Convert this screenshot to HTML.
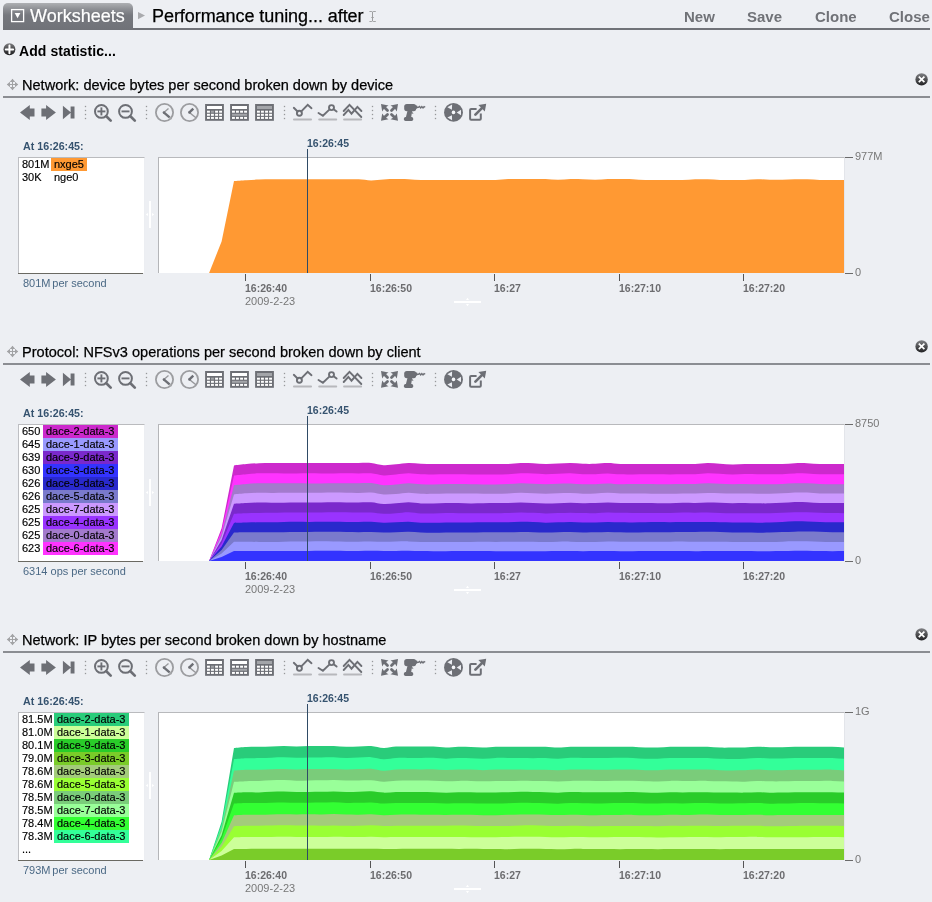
<!DOCTYPE html><html><head><meta charset="utf-8"><title>Worksheets</title><style>
*{box-sizing:border-box;margin:0;padding:0}
html,body{width:932px;height:902px;overflow:hidden;background:#edeff3;font-family:"Liberation Sans",sans-serif;}
#wrap{position:absolute;left:0;top:0;width:932px;height:902px;will-change:transform;}
.abs{position:absolute}
.t{position:absolute;white-space:nowrap;line-height:1}
#tab{left:3px;top:3px;width:130px;height:27px;border-radius:5px 5px 0 0;background:linear-gradient(#aeb0b3 0,#8e9095 22%,#76787e 45%,#707278 100%)}
#hline{left:3px;top:28px;width:927px;height:2px;background:#707278}
.hb{font-weight:bold;font-size:15px;color:#707277;top:9px}
.ptitle{font-size:14.55px;color:#000;-webkit-text-stroke:0.25px #000}
.pline{left:3px;width:927px;height:2px;background:#8b8d92}
.at{font-weight:bold;font-size:10.7px;color:#36536f}
.leg{background:#fff;border:1px solid #babbbe;border-left-color:#bebfc3;border-bottom:0;border-right-color:#eceef2}
.row{position:absolute;left:0;height:13px;font-size:11px;line-height:13px;color:#000;white-space:nowrap;-webkit-text-stroke:0.15px #000}
.row span{position:absolute;top:0;height:13px}
.sum{font-size:11px;color:#4b6985}
.xl{font-weight:bold;font-size:10.5px;color:#6c6c6f}
.xd{font-size:11px;color:#777}
.yl{font-size:11px;color:#777}
.cur{font-weight:bold;font-size:10.5px;color:#36536f}
</style></head><body>
<div id="wrap">
<svg width="0" height="0" style="position:absolute"><defs><g id="tb"><path d="M20 11.5 L29.8 4.1 V7.6 H34.5 V15.5 H29.8 V18.9 Z" fill="#6d6f75"/><path d="M55.9 11.5 L46.1 4.1 V7.6 H41.4 V15.5 H46.1 V18.9 Z" fill="#6d6f75"/><path d="M62.9 4.7 L71 11.5 L62.9 18.3 Z M70.6 5.5 H74.5 V17.5 H70.6 Z" fill="#6d6f75"/><rect x="84.85" y="4.85" width="1.3" height="1.3" fill="#97989b"/><rect x="84.85" y="8.85" width="1.3" height="1.3" fill="#97989b"/><rect x="84.85" y="12.85" width="1.3" height="1.3" fill="#97989b"/><rect x="84.85" y="16.85" width="1.3" height="1.3" fill="#97989b"/><rect x="145.85" y="4.85" width="1.3" height="1.3" fill="#97989b"/><rect x="145.85" y="8.85" width="1.3" height="1.3" fill="#97989b"/><rect x="145.85" y="12.85" width="1.3" height="1.3" fill="#97989b"/><rect x="145.85" y="16.85" width="1.3" height="1.3" fill="#97989b"/><rect x="283.85" y="4.85" width="1.3" height="1.3" fill="#97989b"/><rect x="283.85" y="8.85" width="1.3" height="1.3" fill="#97989b"/><rect x="283.85" y="12.85" width="1.3" height="1.3" fill="#97989b"/><rect x="283.85" y="16.85" width="1.3" height="1.3" fill="#97989b"/><rect x="371.85" y="4.85" width="1.3" height="1.3" fill="#97989b"/><rect x="371.85" y="8.85" width="1.3" height="1.3" fill="#97989b"/><rect x="371.85" y="12.85" width="1.3" height="1.3" fill="#97989b"/><rect x="371.85" y="16.85" width="1.3" height="1.3" fill="#97989b"/><rect x="434.85" y="4.85" width="1.3" height="1.3" fill="#97989b"/><rect x="434.85" y="8.85" width="1.3" height="1.3" fill="#97989b"/><rect x="434.85" y="12.85" width="1.3" height="1.3" fill="#97989b"/><rect x="434.85" y="16.85" width="1.3" height="1.3" fill="#97989b"/><circle cx="101.4" cy="10.4" r="6.4" fill="none" stroke="#6d6f75" stroke-width="2"/><path d="M106.3 15.3 L110.7 19.6" stroke="#6d6f75" stroke-width="2.7" stroke-linecap="round"/><path d="M97.4 10.4 H105.4" stroke="#6d6f75" stroke-width="1.9"/><path d="M101.4 6.4 V14.4" stroke="#6d6f75" stroke-width="1.9"/><circle cx="125.5" cy="10.4" r="6.4" fill="none" stroke="#6d6f75" stroke-width="2"/><path d="M130.4 15.3 L134.8 19.6" stroke="#6d6f75" stroke-width="2.7" stroke-linecap="round"/><path d="M121.5 10.4 H129.5" stroke="#6d6f75" stroke-width="1.9"/><circle cx="164.5" cy="11.5" r="8.6" fill="none" stroke="#9c9da0" stroke-width="1.8"/><path d="M163.9 11.5 L168.5 7.4" stroke="#97989b" stroke-width="1.3"/><path d="M169.6 16.3 L171.6 18.0" stroke="#a5a6a9" stroke-width="1.6"/><path d="M163.7 11.3 L169.6 16.3" stroke="#6d6f75" stroke-width="2.4"/><circle cx="163.9" cy="11.5" r="1.2" fill="#6d6f75"/><circle cx="189.5" cy="11.5" r="8.6" fill="none" stroke="#9c9da0" stroke-width="1.8"/><path d="M189.4 11.5 L196.2 17.0" stroke="#97989b" stroke-width="1.5"/><path d="M189.2 11.7 L193.3 7.6" stroke="#6d6f75" stroke-width="2.4"/><circle cx="189.4" cy="11.5" r="1.2" fill="#6d6f75"/><rect x="205.1" y="3.0" width="18.8" height="16.8" fill="#6d6f75"/><rect x="207.0" y="5.0" width="15" height="3" fill="#fff"/><rect x="207.0" y="9.7" width="2.9" height="2" fill="#fff"/><rect x="211.0" y="9.7" width="2.9" height="2" fill="#a3a5a9"/><rect x="215.1" y="9.7" width="2.9" height="2" fill="#fff"/><rect x="219.1" y="9.7" width="2.9" height="2" fill="#fff"/><rect x="207.0" y="12.8" width="2.9" height="2" fill="#fff"/><rect x="211.0" y="12.8" width="2.9" height="2" fill="#fff"/><rect x="215.1" y="12.8" width="2.9" height="2" fill="#fff"/><rect x="219.1" y="12.8" width="2.9" height="2" fill="#fff"/><rect x="207.0" y="15.9" width="2.9" height="2" fill="#fff"/><rect x="211.0" y="15.9" width="2.9" height="2" fill="#fff"/><rect x="215.1" y="15.9" width="2.9" height="2" fill="#fff"/><rect x="219.1" y="15.9" width="2.9" height="2" fill="#fff"/><rect x="230.1" y="3.0" width="18.8" height="16.8" fill="#6d6f75"/><rect x="232.0" y="5.0" width="15" height="3" fill="#fff"/><rect x="232.0" y="9.7" width="2.9" height="2" fill="#fff"/><rect x="236.0" y="9.7" width="2.9" height="2" fill="#fff"/><rect x="240.1" y="9.7" width="2.9" height="2" fill="#fff"/><rect x="244.1" y="9.7" width="2.9" height="2" fill="#fff"/><rect x="232.0" y="15.9" width="2.9" height="2" fill="#fff"/><rect x="236.0" y="15.9" width="2.9" height="2" fill="#fff"/><rect x="240.1" y="15.9" width="2.9" height="2" fill="#fff"/><rect x="244.1" y="15.9" width="2.9" height="2" fill="#fff"/><rect x="232.0" y="12.8" width="15" height="2" fill="#a3a5a9"/><rect x="255.1" y="3.0" width="18.8" height="16.8" fill="#6d6f75"/><rect x="257.0" y="5.0" width="15" height="3" fill="#a3a5a9"/><rect x="257.0" y="9.7" width="2.9" height="2" fill="#fff"/><rect x="261.0" y="9.7" width="2.9" height="2" fill="#fff"/><rect x="265.1" y="9.7" width="2.9" height="2" fill="#fff"/><rect x="269.1" y="9.7" width="2.9" height="2" fill="#fff"/><rect x="257.0" y="12.8" width="2.9" height="2" fill="#fff"/><rect x="261.0" y="12.8" width="2.9" height="2" fill="#fff"/><rect x="265.1" y="12.8" width="2.9" height="2" fill="#fff"/><rect x="269.1" y="12.8" width="2.9" height="2" fill="#fff"/><rect x="257.0" y="15.9" width="2.9" height="2" fill="#fff"/><rect x="261.0" y="15.9" width="2.9" height="2" fill="#fff"/><rect x="265.1" y="15.9" width="2.9" height="2" fill="#fff"/><rect x="269.1" y="15.9" width="2.9" height="2" fill="#fff"/><rect x="293.0" y="17.5" width="19" height="1.9" rx="0.9" fill="#b7b8bc"/><rect x="318.2" y="17.5" width="19" height="1.9" rx="0.9" fill="#b7b8bc"/><rect x="343.1" y="17.5" width="19" height="1.9" rx="0.9" fill="#b7b8bc"/><path d="M293.8 6.8 L297.6 10.5 M301.3 10.3 L307.7 3.9 L311.5 7.2" fill="none" stroke="#6d6f75" stroke-width="1.9" stroke-linecap="round" stroke-linejoin="miter"/><circle cx="299.4" cy="12.3" r="2.5" fill="none" stroke="#6d6f75" stroke-width="1.9"/><path d="M318.5 12.0 L322.9 14.7 L329.6 8.4 M333.6 8.2 L336.6 10.6" fill="none" stroke="#6d6f75" stroke-width="1.9" stroke-linecap="round" stroke-linejoin="miter"/><circle cx="331.5" cy="6.6" r="2.5" fill="none" stroke="#6d6f75" stroke-width="1.9"/><path d="M343.7 10.0 L349.5 3.9 L361.3 16.0" fill="none" stroke="#6d6f75" stroke-width="1.9" stroke-linecap="round" stroke-linejoin="miter"/><path d="M343.7 14.0 L348.4 8.9 L351.5 12.7 L357.4 5.9 L361.4 10.0" fill="none" stroke="#6d6f75" stroke-width="1.9" stroke-linecap="round" stroke-linejoin="miter"/><path d="M398.00 19.80 L390.50 18.30 Q394.70 16.60 396.80 12.40 Z" fill="#6d6f75"/><path d="M394.70 16.60 L391.50 13.40" stroke="#6d6f75" stroke-width="2.8" stroke-linecap="round"/><path d="M398.00 3.00 L390.50 4.50 Q394.70 6.20 396.80 10.40 Z" fill="#6d6f75"/><path d="M394.70 6.20 L391.50 9.40" stroke="#6d6f75" stroke-width="2.8" stroke-linecap="round"/><path d="M381.00 19.80 L388.50 18.30 Q384.30 16.60 382.20 12.40 Z" fill="#6d6f75"/><path d="M384.30 16.60 L387.50 13.40" stroke="#6d6f75" stroke-width="2.8" stroke-linecap="round"/><path d="M381.00 3.00 L388.50 4.50 Q384.30 6.20 382.20 10.40 Z" fill="#6d6f75"/><path d="M384.30 6.20 L387.50 9.40" stroke="#6d6f75" stroke-width="2.8" stroke-linecap="round"/><rect x="404.2" y="2.9" width="12" height="7.3" rx="2.6" fill="#6d6f75"/><rect x="415" y="4.6" width="2.4" height="3.2" rx="0.8" fill="#6d6f75"/><path d="M407.6 9.4 H412.3 L411 17.0 H405.7 Z" fill="#6d6f75"/><path d="M411.9 10.8 L413.6 12.4 L411.7 12.8 Z" fill="#6d6f75"/><rect x="403.9" y="16.0" width="9.3" height="3.9" rx="1.6" fill="#6d6f75"/><path d="M416.8 6.3 L418.4 6.3 L419.5 5.5 L420.7 6.9 L421.8 5.5 L423 6.9 L424.1 5.5 L425.2 6.2" fill="none" stroke="#6d6f75" stroke-width="1.3"/><circle cx="453.5" cy="11.4" r="9.45" fill="#6d6f75"/><circle cx="453.5" cy="11.4" r="1.8" fill="#f6f7fa"/><path d="M456.70 11.40 L461.02 8.66 L461.02 14.14 Z" fill="#eceef3"/><path d="M451.90 14.17 L452.11 19.28 L447.37 16.54 Z" fill="#eceef3"/><path d="M451.90 8.63 L447.37 6.26 L452.11 3.52 Z" fill="#eceef3"/><path d="M476.6 8.1 H471.1 Q470.1 8.1 470.1 9.1 V17.7 Q470.1 18.7 471.1 18.7 H479.8 Q480.8 18.7 480.8 17.7 V12.6" fill="none" stroke="#6d6f75" stroke-width="2"/><path d="M475.4 13.6 L482.4 6.6" stroke="#6d6f75" stroke-width="2.7" stroke-linecap="round"/><path d="M478.4 4.0 L486.2 2.8 L484.8 10.6 Z" fill="#6d6f75"/></g><g id="mv" fill="#a2a3a5"><rect x="5" y="0.3" width="1" height="10.4"/><rect x="0.3" y="5" width="10.4" height="1"/><path d="M5.5 -0.2 L8.3 3 H2.7 Z M5.5 11.2 L8.3 8 H2.7 Z M-0.2 5.5 L3 2.7 V8.3 Z M11.2 5.5 L8 2.7 V8.3 Z"/></g><linearGradient id="gcl" x1="0" y1="0" x2="0" y2="1"><stop offset="0" stop-color="#808184"/><stop offset="1" stop-color="#202022"/></linearGradient><g id="cl"><circle cx="6.6" cy="6.4" r="6.2" fill="url(#gcl)"/><path d="M3.8 3.6 L9.4 9.2 M9.4 3.6 L3.8 9.2" stroke="#fff" stroke-width="1.7"/></g><g id="vh"><rect x="4" y="0" width="2" height="27" fill="#fff"/><path d="M0.8 13.5 L3 12 V15 Z M9.2 13.5 L7 12 V15 Z" fill="#fff"/></g><g id="hh"><rect x="0" y="4" width="27" height="2" fill="#fff"/><path d="M13.5 0.8 L12 3 H15 Z M13.5 9.2 L12 7 H15 Z" fill="#fff"/></g></defs></svg>
<div class="abs" id="hline"></div>
<div class="abs" id="tab"></div>
<svg class="abs" style="left:10px;top:8px" width="16" height="16" viewBox="0 0 16 16"><rect x="1.6" y="1.6" width="12" height="12" fill="none" stroke="#fff" stroke-width="1.3"/><path d="M4.7 5 L10.4 5 L7.55 10.2 Z" fill="#fff"/></svg>
<div class="t" style="left:30px;top:7px;font-size:18px;color:#fff;-webkit-text-stroke:0.2px #fff">Worksheets</div>
<svg class="abs" style="left:137px;top:11px" width="10" height="10" viewBox="0 0 10 10"><path d="M1 1 L8 4.6 L1 8.2 Z" fill="#a9aaad"/></svg>
<div class="t" style="left:152px;top:7px;font-size:18px;color:#000;-webkit-text-stroke:0.25px #000;letter-spacing:-0.06px">Performance tuning... after</div>
<svg class="abs" style="left:368px;top:9px" width="10" height="15" viewBox="0 0 10 15"><g fill="#a3a4a6"><rect x="1.4" y="2" width="2.5" height="1"/><rect x="5.1" y="2" width="2.7" height="1"/><rect x="1.4" y="12" width="2.5" height="1"/><rect x="5.1" y="12" width="2.7" height="1"/><rect x="3.1" y="8" width="2.9" height="1" fill="#b3b4b6"/><rect x="4" y="2.6" width="1" height="9.8" fill="#9c9d9f"/></g></svg>
<div class="t hb" style="left:684px">New</div>
<div class="t hb" style="left:747px">Save</div>
<div class="t hb" style="left:815px">Clone</div>
<div class="t hb" style="left:889px">Close</div>
<svg class="abs" style="left:2px;top:42px" width="15" height="15" viewBox="0 0 15 15"><defs><linearGradient id="gdk" x1="0" y1="0" x2="0" y2="1"><stop offset="0" stop-color="#7a7a7c"/><stop offset="1" stop-color="#1c1c1e"/></linearGradient></defs><circle cx="7.45" cy="7.3" r="5.95" fill="url(#gdk)"/><path d="M7.45 3.6 V11.2 M3.8 7.4 H11.1" stroke="#fff" stroke-width="2" stroke-linecap="round" fill="none"/></svg>
<div class="t" style="left:19px;top:44px;font-size:14px;font-weight:bold;color:#000;letter-spacing:0.08px">Add statistic...</div>
<svg class="abs" style="left:7px;top:79px;overflow:visible" width="11" height="11"><use href="#mv"/></svg>
<div class="t ptitle" style="left:22px;top:78px">Network: device bytes per second broken down by device</div>
<svg class="abs" style="left:915px;top:73px" width="13" height="13"><use href="#cl"/></svg>
<div class="abs pline" style="top:96px"></div>
<svg class="abs" style="left:0;top:101px" width="500" height="24"><use href="#tb"/></svg>
<div class="t at" style="left:23px;top:141px">At 16:26:45:</div>
<div class="abs leg" style="left:18px;top:157px;width:127px;height:116px">
<div class="row" style="top:0px"><span style="left:3px">801M</span><span style="left:32px;padding:0 3px;background:#ff9933;">nxge5</span></div>
<div class="row" style="top:13px"><span style="left:3px">30K</span><span style="left:32px;padding:0 3px;">nge0</span></div>
</div>
<div class="abs" style="left:18px;top:273px;width:125px;height:1px;background:#6a6962"></div>
<div class="t sum" style="left:23px;top:278px">801M<span style="margin-left:-1.3px"> per second</span></div>
<svg class="abs" style="left:145px;top:201px" width="10" height="27"><use href="#vh"/></svg>
<div class="abs" style="left:158px;top:157px;width:687px;height:116px;background:#fff;border-top:1px solid #b8b9bc;border-left:1px solid #b4b5b8;border-right:1px solid #e3e5ea"></div>
<svg class="abs" style="left:159px;top:158px" width="685" height="115" viewBox="0 0 685 115"><path d="M50.1 115 L50.1 115.0 L62.6 83.5 L75.0 23.0 C77.1 22.87 83.3 22.45 87.5 22.20 C91.7 21.95 95.8 21.65 100.0 21.50 C104.1 21.35 108.3 21.33 112.4 21.30 C116.6 21.27 120.7 21.30 124.9 21.30 C129.0 21.30 133.2 21.30 137.3 21.30 C141.5 21.30 145.6 21.30 149.8 21.30 C154.0 21.30 158.1 21.30 162.3 21.30 C166.4 21.30 170.6 21.30 174.7 21.30 C178.9 21.30 183.0 21.30 187.2 21.30 C191.3 21.30 195.5 21.12 199.6 21.30 C203.8 21.48 207.9 22.38 212.1 22.40 C216.3 22.42 220.4 21.62 224.6 21.40 C228.7 21.18 232.9 21.13 237.0 21.10 C241.2 21.07 245.3 21.05 249.5 21.20 C253.6 21.35 257.8 21.87 261.9 22.00 C266.1 22.13 270.2 22.00 274.4 22.00 C278.6 22.00 282.7 22.00 286.9 22.00 C291.0 22.00 295.2 22.00 299.3 22.00 C303.5 22.00 307.6 22.00 311.8 22.00 C315.9 22.00 320.1 22.00 324.2 22.00 C328.4 22.00 332.5 22.15 336.7 22.00 C340.9 21.85 345.0 21.25 349.2 21.10 C353.3 20.95 357.5 21.10 361.6 21.10 C365.8 21.10 369.9 21.10 374.1 21.10 C378.2 21.10 382.4 20.98 386.5 21.10 C390.7 21.22 394.8 21.80 399.0 21.80 C403.2 21.80 407.3 21.18 411.5 21.10 C415.6 21.02 419.8 21.18 423.9 21.30 C428.1 21.42 432.2 21.83 436.4 21.80 C440.5 21.77 444.7 21.22 448.8 21.10 C453.0 20.98 457.1 21.08 461.3 21.10 C465.5 21.12 469.6 21.05 473.8 21.20 C477.9 21.35 482.1 21.87 486.2 22.00 C490.4 22.13 494.5 22.00 498.7 22.00 C502.8 22.00 507.0 22.00 511.1 22.00 C515.3 22.00 519.4 22.13 523.6 22.00 C527.8 21.87 531.9 21.32 536.1 21.20 C540.2 21.08 544.4 21.17 548.5 21.30 C552.7 21.43 556.8 21.88 561.0 22.00 C565.1 22.12 569.3 22.00 573.4 22.00 C577.6 22.00 581.7 22.13 585.9 22.00 C590.1 21.87 594.2 21.25 598.4 21.20 C602.5 21.15 606.7 21.60 610.8 21.70 C615.0 21.80 619.1 21.88 623.3 21.80 C627.4 21.72 631.6 21.28 635.7 21.20 C639.9 21.12 644.0 21.17 648.2 21.30 C652.4 21.43 656.5 21.88 660.7 22.00 C664.8 22.12 669.0 22.00 673.1 22.00 C677.3 22.00 681.4 22.00 685.6 22.00 C689.7 22.00 696.0 22.00 698.0 22.00 L698.0 115 Z" fill="#ff9933"/></svg>
<div class="abs" style="left:307px;top:149px;width:1px;height:124px;background:#2f4b66"></div>
<div class="t cur" style="left:307px;top:138px">16:26:45</div>
<div class="abs" style="left:845px;top:157px;width:8px;height:1px;background:#6a6a6a"></div>
<div class="abs" style="left:845px;top:273px;width:8px;height:1px;background:#6a6a6a"></div>
<div class="t yl" style="left:855px;top:151px">977M</div>
<div class="t yl" style="left:855px;top:267px">0</div>
<div class="abs" style="left:245px;top:274px;width:1px;height:7px;background:#555"></div>
<div class="t xl" style="left:245px;top:283px">16:26:40</div>
<div class="abs" style="left:370px;top:274px;width:1px;height:7px;background:#555"></div>
<div class="t xl" style="left:370px;top:283px">16:26:50</div>
<div class="abs" style="left:494px;top:274px;width:1px;height:7px;background:#555"></div>
<div class="t xl" style="left:494px;top:283px">16:27</div>
<div class="abs" style="left:619px;top:274px;width:1px;height:7px;background:#555"></div>
<div class="t xl" style="left:619px;top:283px">16:27:10</div>
<div class="abs" style="left:743px;top:274px;width:1px;height:7px;background:#555"></div>
<div class="t xl" style="left:743px;top:283px">16:27:20</div>
<div class="t xd" style="left:245px;top:296px">2009-2-23</div>
<svg class="abs" style="left:454px;top:297px" width="27" height="10"><use href="#hh"/></svg>
<svg class="abs" style="left:7px;top:346px;overflow:visible" width="11" height="11"><use href="#mv"/></svg>
<div class="t ptitle" style="left:22px;top:345px">Protocol: NFSv3 operations per second broken down by client</div>
<svg class="abs" style="left:915px;top:340px" width="13" height="13"><use href="#cl"/></svg>
<div class="abs pline" style="top:363px"></div>
<svg class="abs" style="left:0;top:368px" width="500" height="24"><use href="#tb"/></svg>
<div class="t at" style="left:23px;top:408px">At 16:26:45:</div>
<div class="abs leg" style="left:18px;top:424px;width:127px;height:137px">
<div class="row" style="top:0px"><span style="left:3px">650</span><span style="left:24px;padding:0 3px;background:#cc29cc;">dace-2-data-3</span></div>
<div class="row" style="top:13px"><span style="left:3px">645</span><span style="left:24px;padding:0 3px;background:#9999ff;">dace-1-data-3</span></div>
<div class="row" style="top:26px"><span style="left:3px">639</span><span style="left:24px;padding:0 3px;background:#7a29cc;">dace-9-data-3</span></div>
<div class="row" style="top:39px"><span style="left:3px">630</span><span style="left:24px;padding:0 3px;background:#3333ff;">dace-3-data-3</span></div>
<div class="row" style="top:52px"><span style="left:3px">626</span><span style="left:24px;padding:0 3px;background:#2929cc;">dace-8-data-3</span></div>
<div class="row" style="top:65px"><span style="left:3px">626</span><span style="left:24px;padding:0 3px;background:#7a7acc;">dace-5-data-3</span></div>
<div class="row" style="top:78px"><span style="left:3px">625</span><span style="left:24px;padding:0 3px;background:#cc99ff;">dace-7-data-3</span></div>
<div class="row" style="top:91px"><span style="left:3px">625</span><span style="left:24px;padding:0 3px;background:#9933ff;">dace-4-data-3</span></div>
<div class="row" style="top:104px"><span style="left:3px">625</span><span style="left:24px;padding:0 3px;background:#a37acc;">dace-0-data-3</span></div>
<div class="row" style="top:117px"><span style="left:3px">623</span><span style="left:24px;padding:0 3px;background:#ff33ff;">dace-6-data-3</span></div>
</div>
<div class="abs" style="left:18px;top:561px;width:125px;height:1px;background:#6a6962"></div>
<div class="t sum" style="left:23px;top:566px">6314 ops per second</div>
<svg class="abs" style="left:145px;top:479px" width="10" height="27"><use href="#vh"/></svg>
<div class="abs" style="left:158px;top:424px;width:687px;height:137px;background:#fff;border-top:1px solid #b8b9bc;border-left:1px solid #b4b5b8;border-right:1px solid #e3e5ea"></div>
<svg class="abs" style="left:159px;top:425px" width="685" height="136" viewBox="0 0 685 136"><path d="M50.1 136 L50.1 136.0 L62.6 103.3 L75.0 40.4 C77.1 40.18 83.3 39.47 87.5 39.10 C91.7 38.73 95.8 38.38 100.0 38.20 C104.1 38.02 108.3 38.03 112.4 38.00 C116.6 37.97 120.7 38.00 124.9 38.00 C129.0 38.00 133.2 38.00 137.3 38.00 C141.5 38.00 145.6 38.00 149.8 38.00 C154.0 38.00 158.1 38.00 162.3 38.00 C166.4 38.00 170.6 38.00 174.7 38.00 C178.9 38.00 183.0 38.00 187.2 38.00 C191.3 38.00 195.5 38.00 199.6 38.00 C203.8 38.00 207.9 37.63 212.1 38.00 C216.3 38.37 220.4 39.98 224.6 40.20 C228.7 40.42 232.9 39.67 237.0 39.30 C241.2 38.93 245.3 38.08 249.5 38.00 C253.6 37.92 257.8 38.63 261.9 38.80 C266.1 38.97 270.2 38.97 274.4 39.00 C278.6 39.03 282.7 39.00 286.9 39.00 C291.0 39.00 295.2 39.00 299.3 39.00 C303.5 39.00 307.6 39.00 311.8 39.00 C315.9 39.00 320.1 39.00 324.2 39.00 C328.4 39.00 332.5 39.00 336.7 39.00 C340.9 39.00 345.0 39.17 349.2 39.00 C353.3 38.83 357.5 38.13 361.6 38.00 C365.8 37.87 369.9 38.03 374.1 38.20 C378.2 38.37 382.4 38.93 386.5 39.00 C390.7 39.07 394.8 38.77 399.0 38.60 C403.2 38.43 407.3 37.97 411.5 38.00 C415.6 38.03 419.8 38.67 423.9 38.80 C428.1 38.93 432.2 38.93 436.4 38.80 C440.5 38.67 444.7 37.98 448.8 38.00 C453.0 38.02 457.1 38.73 461.3 38.90 C465.5 39.07 469.6 38.98 473.8 39.00 C477.9 39.02 482.1 39.00 486.2 39.00 C490.4 39.00 494.5 39.00 498.7 39.00 C502.8 39.00 507.0 39.00 511.1 39.00 C515.3 39.00 519.4 39.00 523.6 39.00 C527.8 39.00 531.9 39.17 536.1 39.00 C540.2 38.83 544.4 38.05 548.5 38.00 C552.7 37.95 556.8 38.45 561.0 38.70 C565.1 38.95 569.3 39.45 573.4 39.50 C577.6 39.55 581.7 39.08 585.9 39.00 C590.1 38.92 594.2 39.00 598.4 39.00 C602.5 39.00 606.7 39.00 610.8 39.00 C615.0 39.00 619.1 39.13 623.3 39.00 C627.4 38.87 631.6 38.33 635.7 38.20 C639.9 38.07 644.0 38.07 648.2 38.20 C652.4 38.33 656.5 38.87 660.7 39.00 C664.8 39.13 669.0 39.00 673.1 39.00 C677.3 39.00 681.4 39.00 685.6 39.00 C689.7 39.00 696.0 39.00 698.0 39.00 L698.0 136 Z" fill="#cc29cc"/><path d="M50.1 136 L50.1 136.0 L62.6 106.1 L75.0 50.5 C77.1 50.31 83.3 49.62 87.5 49.26 C91.7 48.90 95.8 48.51 100.0 48.36 C104.1 48.21 108.3 48.37 112.4 48.37 C116.6 48.38 120.7 48.39 124.9 48.40 C129.0 48.40 133.2 48.41 137.3 48.40 C141.5 48.40 145.6 48.36 149.8 48.36 C154.0 48.36 158.1 48.42 162.3 48.42 C166.4 48.43 170.6 48.39 174.7 48.38 C178.9 48.37 183.0 48.37 187.2 48.37 C191.3 48.37 195.5 48.40 199.6 48.40 C203.8 48.39 207.9 48.00 212.1 48.34 C216.3 48.67 220.4 50.20 224.6 50.39 C228.7 50.58 232.9 49.81 237.0 49.47 C241.2 49.12 245.3 48.34 249.5 48.31 C253.6 48.28 257.8 49.10 261.9 49.29 C266.1 49.47 270.2 49.42 274.4 49.42 C278.6 49.41 282.7 49.30 286.9 49.27 C291.0 49.24 295.2 49.22 299.3 49.24 C303.5 49.26 307.6 49.36 311.8 49.40 C315.9 49.43 320.1 49.43 324.2 49.45 C328.4 49.46 332.5 49.51 336.7 49.49 C340.9 49.47 345.0 49.53 349.2 49.32 C353.3 49.12 357.5 48.39 361.6 48.26 C365.8 48.14 369.9 48.42 374.1 48.58 C378.2 48.73 382.4 49.16 386.5 49.18 C390.7 49.20 394.8 48.82 399.0 48.68 C403.2 48.54 407.3 48.26 411.5 48.35 C415.6 48.44 419.8 49.08 423.9 49.21 C428.1 49.34 432.2 49.26 436.4 49.13 C440.5 48.99 444.7 48.37 448.8 48.40 C453.0 48.43 457.1 49.14 461.3 49.31 C465.5 49.47 469.6 49.41 473.8 49.40 C477.9 49.38 482.1 49.25 486.2 49.23 C490.4 49.21 494.5 49.25 498.7 49.28 C502.8 49.32 507.0 49.44 511.1 49.44 C515.3 49.44 519.4 49.32 523.6 49.29 C527.8 49.25 531.9 49.41 536.1 49.25 C540.2 49.09 544.4 48.41 548.5 48.34 C552.7 48.28 556.8 48.65 561.0 48.84 C565.1 49.04 569.3 49.48 573.4 49.52 C577.6 49.56 581.7 49.14 585.9 49.10 C590.1 49.05 594.2 49.22 598.4 49.26 C602.5 49.30 606.7 49.35 610.8 49.32 C615.0 49.30 619.1 49.28 623.3 49.13 C627.4 48.97 631.6 48.49 635.7 48.39 C639.9 48.29 644.0 48.38 648.2 48.53 C652.4 48.68 656.5 49.16 660.7 49.28 C664.8 49.41 669.0 49.29 673.1 49.28 C677.3 49.27 681.4 49.21 685.6 49.20 C689.7 49.20 696.0 49.25 698.0 49.26 L698.0 136 Z" fill="#ff33ff"/><path d="M50.1 136 L50.1 136.0 L62.6 109.0 L75.0 60.2 C77.1 60.05 83.3 59.42 87.5 59.08 C91.7 58.75 95.8 58.36 100.0 58.24 C104.1 58.11 108.3 58.33 112.4 58.34 C116.6 58.36 120.7 58.34 124.9 58.33 C129.0 58.32 133.2 58.26 137.3 58.28 C141.5 58.29 145.6 58.39 149.8 58.43 C154.0 58.46 158.1 58.48 162.3 58.47 C166.4 58.46 170.6 58.39 174.7 58.37 C178.9 58.34 183.0 58.36 187.2 58.34 C191.3 58.32 195.5 58.28 199.6 58.23 C203.8 58.19 207.9 57.78 212.1 58.10 C216.3 58.42 220.4 59.92 224.6 60.15 C228.7 60.39 232.9 59.84 237.0 59.52 C241.2 59.20 245.3 58.28 249.5 58.23 C253.6 58.18 257.8 59.02 261.9 59.21 C266.1 59.40 270.2 59.40 274.4 59.39 C278.6 59.37 282.7 59.17 286.9 59.12 C291.0 59.06 295.2 59.04 299.3 59.06 C303.5 59.08 307.6 59.18 311.8 59.25 C315.9 59.31 320.1 59.41 324.2 59.44 C328.4 59.48 332.5 59.50 336.7 59.44 C340.9 59.39 345.0 59.30 349.2 59.10 C353.3 58.89 357.5 58.27 361.6 58.20 C365.8 58.12 369.9 58.48 374.1 58.65 C378.2 58.82 382.4 59.22 386.5 59.23 C390.7 59.24 394.8 58.85 399.0 58.73 C403.2 58.61 407.3 58.40 411.5 58.50 C415.6 58.60 419.8 59.23 423.9 59.34 C428.1 59.44 432.2 59.29 436.4 59.14 C440.5 58.98 444.7 58.38 448.8 58.39 C453.0 58.41 457.1 59.12 461.3 59.24 C465.5 59.36 469.6 59.17 473.8 59.12 C477.9 59.06 482.1 58.92 486.2 58.93 C490.4 58.94 494.5 59.13 498.7 59.18 C502.8 59.24 507.0 59.29 511.1 59.27 C515.3 59.25 519.4 59.11 523.6 59.07 C527.8 59.03 531.9 59.17 536.1 59.03 C540.2 58.90 544.4 58.34 548.5 58.28 C552.7 58.22 556.8 58.52 561.0 58.68 C565.1 58.85 569.3 59.18 573.4 59.24 C577.6 59.31 581.7 59.04 585.9 59.06 C590.1 59.08 594.2 59.30 598.4 59.34 C602.5 59.38 606.7 59.36 610.8 59.29 C615.0 59.22 619.1 59.10 623.3 58.93 C627.4 58.75 631.6 58.33 635.7 58.23 C639.9 58.13 644.0 58.20 648.2 58.33 C652.4 58.47 656.5 58.88 660.7 59.04 C664.8 59.20 669.0 59.22 673.1 59.27 C677.3 59.32 681.4 59.31 685.6 59.32 C689.7 59.33 696.0 59.33 698.0 59.33 L698.0 136 Z" fill="#a37acc"/><path d="M50.1 136 L50.1 136.0 L62.6 111.8 L75.0 69.4 C77.1 69.21 83.3 68.63 87.5 68.36 C91.7 68.09 95.8 67.82 100.0 67.74 C104.1 67.67 108.3 67.90 112.4 67.92 C116.6 67.94 120.7 67.90 124.9 67.86 C129.0 67.82 133.2 67.70 137.3 67.68 C141.5 67.66 145.6 67.74 149.8 67.75 C154.0 67.76 158.1 67.77 162.3 67.74 C166.4 67.71 170.6 67.56 174.7 67.57 C178.9 67.58 183.0 67.74 187.2 67.80 C191.3 67.86 195.5 67.96 199.6 67.93 C203.8 67.89 207.9 67.34 212.1 67.59 C216.3 67.83 220.4 69.18 224.6 69.40 C228.7 69.62 232.9 69.18 237.0 68.90 C241.2 68.61 245.3 67.70 249.5 67.67 C253.6 67.65 257.8 68.57 261.9 68.76 C266.1 68.95 270.2 68.87 274.4 68.81 C278.6 68.75 282.7 68.46 286.9 68.40 C291.0 68.34 295.2 68.42 299.3 68.46 C303.5 68.49 307.6 68.58 311.8 68.62 C315.9 68.67 320.1 68.71 324.2 68.72 C328.4 68.74 332.5 68.77 336.7 68.72 C340.9 68.67 345.0 68.60 349.2 68.43 C353.3 68.26 357.5 67.76 361.6 67.72 C365.8 67.68 369.9 68.03 374.1 68.19 C378.2 68.35 382.4 68.65 386.5 68.67 C390.7 68.69 394.8 68.43 399.0 68.33 C403.2 68.24 407.3 68.05 411.5 68.10 C415.6 68.16 419.8 68.60 423.9 68.66 C428.1 68.73 432.2 68.63 436.4 68.50 C440.5 68.36 444.7 67.85 448.8 67.86 C453.0 67.87 457.1 68.45 461.3 68.56 C465.5 68.68 469.6 68.56 473.8 68.53 C477.9 68.50 482.1 68.37 486.2 68.40 C490.4 68.43 494.5 68.62 498.7 68.69 C502.8 68.76 507.0 68.87 511.1 68.83 C515.3 68.80 519.4 68.55 523.6 68.49 C527.8 68.43 531.9 68.58 536.1 68.48 C540.2 68.39 544.4 67.97 548.5 67.91 C552.7 67.86 556.8 68.06 561.0 68.17 C565.1 68.28 569.3 68.53 573.4 68.57 C577.6 68.62 581.7 68.43 585.9 68.44 C590.1 68.46 594.2 68.62 598.4 68.66 C602.5 68.70 606.7 68.75 610.8 68.68 C615.0 68.62 619.1 68.48 623.3 68.28 C627.4 68.08 631.6 67.58 635.7 67.46 C639.9 67.35 644.0 67.43 648.2 67.59 C652.4 67.74 656.5 68.22 660.7 68.38 C664.8 68.55 669.0 68.54 673.1 68.57 C677.3 68.60 681.4 68.52 685.6 68.55 C689.7 68.58 696.0 68.71 698.0 68.74 L698.0 136 Z" fill="#cc99ff"/><path d="M50.1 136 L50.1 136.0 L62.6 114.9 L75.0 78.8 C77.1 78.70 83.3 78.28 87.5 78.07 C91.7 77.85 95.8 77.61 100.0 77.55 C104.1 77.49 108.3 77.71 112.4 77.72 C116.6 77.73 120.7 77.68 124.9 77.63 C129.0 77.59 133.2 77.45 137.3 77.44 C141.5 77.44 145.6 77.60 149.8 77.60 C154.0 77.60 158.1 77.48 162.3 77.42 C166.4 77.36 170.6 77.23 174.7 77.24 C178.9 77.24 183.0 77.40 187.2 77.43 C191.3 77.46 195.5 77.41 199.6 77.40 C203.8 77.39 207.9 77.09 212.1 77.36 C216.3 77.64 220.4 78.91 224.6 79.08 C228.7 79.24 232.9 78.66 237.0 78.36 C241.2 78.06 245.3 77.28 249.5 77.28 C253.6 77.29 257.8 78.20 261.9 78.40 C266.1 78.60 270.2 78.53 274.4 78.46 C278.6 78.39 282.7 78.03 286.9 77.98 C291.0 77.92 295.2 78.04 299.3 78.11 C303.5 78.18 307.6 78.38 311.8 78.41 C315.9 78.43 320.1 78.31 324.2 78.25 C328.4 78.20 332.5 78.11 336.7 78.08 C340.9 78.04 345.0 78.13 349.2 78.03 C353.3 77.93 357.5 77.51 361.6 77.50 C365.8 77.49 369.9 77.80 374.1 77.96 C378.2 78.11 382.4 78.42 386.5 78.46 C390.7 78.50 394.8 78.31 399.0 78.19 C403.2 78.07 407.3 77.74 411.5 77.74 C415.6 77.74 419.8 78.13 423.9 78.18 C428.1 78.22 432.2 78.15 436.4 78.03 C440.5 77.91 444.7 77.47 448.8 77.46 C453.0 77.45 457.1 77.87 461.3 77.97 C465.5 78.06 469.6 78.04 473.8 78.03 C477.9 78.02 482.1 77.90 486.2 77.92 C490.4 77.94 494.5 78.10 498.7 78.16 C502.8 78.22 507.0 78.33 511.1 78.28 C515.3 78.23 519.4 77.91 523.6 77.85 C527.8 77.80 531.9 77.98 536.1 77.93 C540.2 77.89 544.4 77.59 548.5 77.58 C552.7 77.57 556.8 77.78 561.0 77.87 C565.1 77.97 569.3 78.13 573.4 78.15 C577.6 78.16 581.7 77.93 585.9 77.96 C590.1 77.99 594.2 78.25 598.4 78.31 C602.5 78.37 606.7 78.41 610.8 78.34 C615.0 78.26 619.1 78.08 623.3 77.86 C627.4 77.64 631.6 77.11 635.7 77.00 C639.9 76.90 644.0 77.05 648.2 77.21 C652.4 77.38 656.5 77.86 660.7 77.99 C664.8 78.12 669.0 78.00 673.1 78.00 C677.3 78.01 681.4 77.98 685.6 78.03 C689.7 78.07 696.0 78.23 698.0 78.27 L698.0 136 Z" fill="#7a29cc"/><path d="M50.1 136 L50.1 136.0 L62.6 118.2 L75.0 88.7 C77.1 88.61 83.3 88.33 87.5 88.20 C91.7 88.07 95.8 87.97 100.0 87.90 C104.1 87.83 108.3 87.87 112.4 87.78 C116.6 87.70 120.7 87.47 124.9 87.41 C129.0 87.36 133.2 87.40 137.3 87.44 C141.5 87.47 145.6 87.61 149.8 87.60 C154.0 87.59 158.1 87.45 162.3 87.39 C166.4 87.32 170.6 87.20 174.7 87.19 C178.9 87.18 183.0 87.25 187.2 87.32 C191.3 87.39 195.5 87.57 199.6 87.60 C203.8 87.63 207.9 87.29 212.1 87.49 C216.3 87.69 220.4 88.67 224.6 88.79 C228.7 88.91 232.9 88.47 237.0 88.21 C241.2 87.95 245.3 87.21 249.5 87.24 C253.6 87.27 257.8 88.17 261.9 88.39 C266.1 88.61 270.2 88.63 274.4 88.57 C278.6 88.51 282.7 88.09 286.9 88.03 C291.0 87.96 295.2 88.14 299.3 88.19 C303.5 88.24 307.6 88.34 311.8 88.34 C315.9 88.34 320.1 88.21 324.2 88.18 C328.4 88.15 332.5 88.18 336.7 88.16 C340.9 88.14 345.0 88.20 349.2 88.07 C353.3 87.95 357.5 87.44 361.6 87.40 C365.8 87.35 369.9 87.61 374.1 87.79 C378.2 87.96 382.4 88.38 386.5 88.44 C390.7 88.49 394.8 88.24 399.0 88.12 C403.2 87.99 407.3 87.70 411.5 87.70 C415.6 87.70 419.8 88.04 423.9 88.12 C428.1 88.19 432.2 88.23 436.4 88.13 C440.5 88.03 444.7 87.56 448.8 87.52 C453.0 87.47 457.1 87.78 461.3 87.86 C465.5 87.93 469.6 87.97 473.8 88.00 C477.9 88.02 482.1 87.97 486.2 87.98 C490.4 87.98 494.5 88.04 498.7 88.04 C502.8 88.04 507.0 88.06 511.1 87.98 C515.3 87.91 519.4 87.63 523.6 87.59 C527.8 87.55 531.9 87.77 536.1 87.75 C540.2 87.74 544.4 87.50 548.5 87.52 C552.7 87.55 556.8 87.77 561.0 87.90 C565.1 88.02 569.3 88.24 573.4 88.28 C577.6 88.32 581.7 88.14 585.9 88.15 C590.1 88.16 594.2 88.33 598.4 88.34 C602.5 88.35 606.7 88.30 610.8 88.21 C615.0 88.11 619.1 87.93 623.3 87.77 C627.4 87.60 631.6 87.30 635.7 87.21 C639.9 87.13 644.0 87.17 648.2 87.27 C652.4 87.37 656.5 87.69 660.7 87.82 C664.8 87.95 669.0 88.00 673.1 88.05 C677.3 88.11 681.4 88.12 685.6 88.15 C689.7 88.18 696.0 88.23 698.0 88.25 L698.0 136 Z" fill="#9933ff"/><path d="M50.1 136 L50.1 136.0 L62.6 121.4 L75.0 97.9 C77.1 97.85 83.3 97.68 87.5 97.58 C91.7 97.48 95.8 97.36 100.0 97.29 C104.1 97.22 108.3 97.24 112.4 97.17 C116.6 97.10 120.7 96.96 124.9 96.89 C129.0 96.83 133.2 96.77 137.3 96.77 C141.5 96.78 145.6 96.93 149.8 96.94 C154.0 96.95 158.1 96.86 162.3 96.82 C166.4 96.78 170.6 96.69 174.7 96.70 C178.9 96.71 183.0 96.85 187.2 96.90 C191.3 96.94 195.5 96.99 199.6 96.97 C203.8 96.95 207.9 96.64 212.1 96.77 C216.3 96.91 220.4 97.67 224.6 97.77 C228.7 97.87 232.9 97.53 237.0 97.37 C241.2 97.21 245.3 96.76 249.5 96.81 C253.6 96.87 257.8 97.53 261.9 97.69 C266.1 97.85 270.2 97.82 274.4 97.78 C278.6 97.75 282.7 97.54 286.9 97.49 C291.0 97.44 295.2 97.48 299.3 97.46 C303.5 97.45 307.6 97.46 311.8 97.42 C315.9 97.38 320.1 97.25 324.2 97.22 C328.4 97.18 332.5 97.22 336.7 97.23 C340.9 97.24 345.0 97.36 349.2 97.29 C353.3 97.21 357.5 96.82 361.6 96.79 C365.8 96.76 369.9 96.97 374.1 97.12 C378.2 97.26 382.4 97.63 386.5 97.65 C390.7 97.68 394.8 97.39 399.0 97.27 C403.2 97.14 407.3 96.88 411.5 96.92 C415.6 96.96 419.8 97.37 423.9 97.48 C428.1 97.58 432.2 97.63 436.4 97.55 C440.5 97.47 444.7 97.04 448.8 97.01 C453.0 96.97 457.1 97.27 461.3 97.33 C465.5 97.40 469.6 97.43 473.8 97.40 C477.9 97.37 482.1 97.22 486.2 97.17 C490.4 97.12 494.5 97.09 498.7 97.09 C502.8 97.08 507.0 97.17 511.1 97.16 C515.3 97.15 519.4 97.01 523.6 97.00 C527.8 97.00 531.9 97.13 536.1 97.12 C540.2 97.12 544.4 96.95 548.5 96.98 C552.7 97.00 556.8 97.19 561.0 97.26 C565.1 97.33 569.3 97.36 573.4 97.40 C577.6 97.43 581.7 97.40 585.9 97.45 C590.1 97.50 594.2 97.66 598.4 97.67 C602.5 97.68 606.7 97.64 610.8 97.53 C615.0 97.41 619.1 97.18 623.3 96.99 C627.4 96.80 631.6 96.45 635.7 96.37 C639.9 96.29 644.0 96.41 648.2 96.51 C652.4 96.62 656.5 96.88 660.7 97.01 C664.8 97.13 669.0 97.20 673.1 97.26 C677.3 97.31 681.4 97.29 685.6 97.32 C689.7 97.35 696.0 97.40 698.0 97.42 L698.0 136 Z" fill="#2929cc"/><path d="M50.1 136 L50.1 136.0 L62.6 124.9 L75.0 107.6 C77.1 107.53 83.3 107.39 87.5 107.34 C91.7 107.30 95.8 107.28 100.0 107.28 C104.1 107.28 108.3 107.37 112.4 107.35 C116.6 107.33 120.7 107.23 124.9 107.17 C129.0 107.10 133.2 107.00 137.3 106.97 C141.5 106.94 145.6 107.01 149.8 106.98 C154.0 106.95 158.1 106.84 162.3 106.81 C166.4 106.78 170.6 106.78 174.7 106.81 C178.9 106.85 183.0 106.97 187.2 107.03 C191.3 107.08 195.5 107.15 199.6 107.15 C203.8 107.15 207.9 106.96 212.1 107.04 C216.3 107.12 220.4 107.61 224.6 107.62 C228.7 107.64 232.9 107.31 237.0 107.15 C241.2 107.00 245.3 106.65 249.5 106.71 C253.6 106.76 257.8 107.33 261.9 107.49 C266.1 107.66 270.2 107.71 274.4 107.70 C278.6 107.69 282.7 107.49 286.9 107.44 C291.0 107.39 295.2 107.42 299.3 107.42 C303.5 107.42 307.6 107.47 311.8 107.42 C315.9 107.38 320.1 107.20 324.2 107.16 C328.4 107.12 332.5 107.17 336.7 107.20 C340.9 107.23 345.0 107.37 349.2 107.34 C353.3 107.31 357.5 107.06 361.6 107.02 C365.8 106.99 369.9 107.07 374.1 107.14 C378.2 107.20 382.4 107.43 386.5 107.44 C390.7 107.45 394.8 107.26 399.0 107.19 C403.2 107.12 407.3 106.99 411.5 107.02 C415.6 107.05 419.8 107.34 423.9 107.39 C428.1 107.44 432.2 107.40 436.4 107.31 C440.5 107.22 444.7 106.89 448.8 106.88 C453.0 106.87 457.1 107.17 461.3 107.27 C465.5 107.37 469.6 107.49 473.8 107.48 C477.9 107.48 482.1 107.29 486.2 107.24 C490.4 107.20 494.5 107.24 498.7 107.23 C502.8 107.22 507.0 107.23 511.1 107.20 C515.3 107.16 519.4 107.03 523.6 107.02 C527.8 107.01 531.9 107.15 536.1 107.11 C540.2 107.08 544.4 106.84 548.5 106.84 C552.7 106.83 556.8 106.97 561.0 107.07 C565.1 107.17 569.3 107.38 573.4 107.45 C577.6 107.52 581.7 107.44 585.9 107.47 C590.1 107.51 594.2 107.62 598.4 107.64 C602.5 107.66 606.7 107.69 610.8 107.60 C615.0 107.52 619.1 107.28 623.3 107.12 C627.4 106.96 631.6 106.74 635.7 106.65 C639.9 106.57 644.0 106.58 648.2 106.62 C652.4 106.65 656.5 106.77 660.7 106.86 C664.8 106.94 669.0 107.05 673.1 107.14 C677.3 107.22 681.4 107.29 685.6 107.35 C689.7 107.41 696.0 107.47 698.0 107.50 L698.0 136 Z" fill="#7a7acc"/><path d="M50.1 136 L50.1 136.0 L62.6 128.5 L75.0 116.8 C77.1 116.80 83.3 116.70 87.5 116.72 C91.7 116.74 95.8 116.88 100.0 116.93 C104.1 116.98 108.3 117.05 112.4 117.01 C116.6 116.97 120.7 116.79 124.9 116.70 C129.0 116.62 133.2 116.53 137.3 116.49 C141.5 116.46 145.6 116.52 149.8 116.50 C154.0 116.48 158.1 116.35 162.3 116.36 C166.4 116.37 170.6 116.51 174.7 116.55 C178.9 116.60 183.0 116.62 187.2 116.64 C191.3 116.65 195.5 116.66 199.6 116.65 C203.8 116.64 207.9 116.55 212.1 116.59 C216.3 116.62 220.4 116.88 224.6 116.87 C228.7 116.87 232.9 116.65 237.0 116.57 C241.2 116.49 245.3 116.32 249.5 116.39 C253.6 116.45 257.8 116.84 261.9 116.95 C266.1 117.07 270.2 117.06 274.4 117.07 C278.6 117.08 282.7 117.02 286.9 117.00 C291.0 116.98 295.2 116.96 299.3 116.94 C303.5 116.93 307.6 116.92 311.8 116.91 C315.9 116.89 320.1 116.88 324.2 116.87 C328.4 116.87 332.5 116.90 336.7 116.90 C340.9 116.89 345.0 116.88 349.2 116.84 C353.3 116.80 357.5 116.65 361.6 116.65 C365.8 116.65 369.9 116.77 374.1 116.84 C378.2 116.91 382.4 117.07 386.5 117.05 C390.7 117.02 394.8 116.75 399.0 116.68 C403.2 116.61 407.3 116.58 411.5 116.64 C415.6 116.70 419.8 117.01 423.9 117.06 C428.1 117.11 432.2 117.02 436.4 116.93 C440.5 116.85 444.7 116.57 448.8 116.54 C453.0 116.52 457.1 116.75 461.3 116.79 C465.5 116.83 469.6 116.81 473.8 116.79 C477.9 116.78 482.1 116.73 486.2 116.73 C490.4 116.72 494.5 116.78 498.7 116.76 C502.8 116.75 507.0 116.68 511.1 116.66 C515.3 116.63 519.4 116.58 523.6 116.62 C527.8 116.66 531.9 116.85 536.1 116.87 C540.2 116.89 544.4 116.75 548.5 116.74 C552.7 116.72 556.8 116.75 561.0 116.79 C565.1 116.82 569.3 116.92 573.4 116.95 C577.6 116.98 581.7 116.94 585.9 116.97 C590.1 116.99 594.2 117.08 598.4 117.09 C602.5 117.09 606.7 117.06 610.8 116.98 C615.0 116.91 619.1 116.74 623.3 116.63 C627.4 116.52 631.6 116.39 635.7 116.34 C639.9 116.28 644.0 116.26 648.2 116.32 C652.4 116.37 656.5 116.56 660.7 116.66 C664.8 116.77 669.0 116.88 673.1 116.93 C677.3 116.98 681.4 116.95 685.6 116.95 C689.7 116.95 696.0 116.93 698.0 116.93 L698.0 136 Z" fill="#9999ff"/><path d="M50.1 136 L50.1 136.0 L62.6 132.0 L75.0 126.1 C77.1 126.04 83.3 125.94 87.5 125.94 C91.7 125.94 95.8 126.02 100.0 126.05 C104.1 126.08 108.3 126.13 112.4 126.12 C116.6 126.11 120.7 126.01 124.9 125.98 C129.0 125.96 133.2 125.98 137.3 125.97 C141.5 125.96 145.6 125.95 149.8 125.92 C154.0 125.88 158.1 125.78 162.3 125.76 C166.4 125.74 170.6 125.76 174.7 125.80 C178.9 125.84 183.0 125.95 187.2 126.00 C191.3 126.05 195.5 126.13 199.6 126.11 C203.8 126.09 207.9 125.89 212.1 125.87 C216.3 125.86 220.4 126.02 224.6 126.03 C228.7 126.03 232.9 125.97 237.0 125.93 C241.2 125.89 245.3 125.76 249.5 125.79 C253.6 125.81 257.8 126.02 261.9 126.09 C266.1 126.16 270.2 126.19 274.4 126.21 C278.6 126.22 282.7 126.20 286.9 126.18 C291.0 126.17 295.2 126.14 299.3 126.12 C303.5 126.09 307.6 126.04 311.8 126.01 C315.9 125.98 320.1 125.94 324.2 125.96 C328.4 125.98 332.5 126.08 336.7 126.13 C340.9 126.17 345.0 126.23 349.2 126.24 C353.3 126.25 357.5 126.20 361.6 126.19 C365.8 126.18 369.9 126.19 374.1 126.19 C378.2 126.19 382.4 126.20 386.5 126.18 C390.7 126.16 394.8 126.11 399.0 126.09 C403.2 126.07 407.3 126.02 411.5 126.04 C415.6 126.07 419.8 126.23 423.9 126.24 C428.1 126.25 432.2 126.16 436.4 126.10 C440.5 126.05 444.7 125.89 448.8 125.90 C453.0 125.91 457.1 126.10 461.3 126.14 C465.5 126.18 469.6 126.16 473.8 126.13 C477.9 126.10 482.1 125.98 486.2 125.94 C490.4 125.91 494.5 125.93 498.7 125.94 C502.8 125.95 507.0 126.00 511.1 126.00 C515.3 125.99 519.4 125.90 523.6 125.92 C527.8 125.95 531.9 126.10 536.1 126.13 C540.2 126.16 544.4 126.13 548.5 126.10 C552.7 126.07 556.8 125.95 561.0 125.93 C565.1 125.91 569.3 125.97 573.4 125.99 C577.6 126.01 581.7 126.02 585.9 126.06 C590.1 126.09 594.2 126.15 598.4 126.18 C602.5 126.21 606.7 126.26 610.8 126.23 C615.0 126.21 619.1 126.12 623.3 126.04 C627.4 125.95 631.6 125.78 635.7 125.73 C639.9 125.67 644.0 125.67 648.2 125.72 C652.4 125.77 656.5 125.94 660.7 126.00 C664.8 126.07 669.0 126.13 673.1 126.13 C677.3 126.14 681.4 126.03 685.6 126.02 C689.7 126.00 696.0 126.05 698.0 126.06 L698.0 136 Z" fill="#3333ff"/></svg>
<div class="abs" style="left:307px;top:416px;width:1px;height:145px;background:#2f4b66"></div>
<div class="t cur" style="left:307px;top:405px">16:26:45</div>
<div class="abs" style="left:845px;top:424px;width:8px;height:1px;background:#6a6a6a"></div>
<div class="abs" style="left:845px;top:561px;width:8px;height:1px;background:#6a6a6a"></div>
<div class="t yl" style="left:855px;top:418px">8750</div>
<div class="t yl" style="left:855px;top:555px">0</div>
<div class="abs" style="left:245px;top:562px;width:1px;height:7px;background:#555"></div>
<div class="t xl" style="left:245px;top:571px">16:26:40</div>
<div class="abs" style="left:370px;top:562px;width:1px;height:7px;background:#555"></div>
<div class="t xl" style="left:370px;top:571px">16:26:50</div>
<div class="abs" style="left:494px;top:562px;width:1px;height:7px;background:#555"></div>
<div class="t xl" style="left:494px;top:571px">16:27</div>
<div class="abs" style="left:619px;top:562px;width:1px;height:7px;background:#555"></div>
<div class="t xl" style="left:619px;top:571px">16:27:10</div>
<div class="abs" style="left:743px;top:562px;width:1px;height:7px;background:#555"></div>
<div class="t xl" style="left:743px;top:571px">16:27:20</div>
<div class="t xd" style="left:245px;top:584px">2009-2-23</div>
<svg class="abs" style="left:454px;top:585px" width="27" height="10"><use href="#hh"/></svg>
<svg class="abs" style="left:7px;top:634px;overflow:visible" width="11" height="11"><use href="#mv"/></svg>
<div class="t ptitle" style="left:22px;top:633px">Network: IP bytes per second broken down by hostname</div>
<svg class="abs" style="left:915px;top:628px" width="13" height="13"><use href="#cl"/></svg>
<div class="abs pline" style="top:651px"></div>
<svg class="abs" style="left:0;top:656px" width="500" height="24"><use href="#tb"/></svg>
<div class="t at" style="left:23px;top:696px">At 16:26:45:</div>
<div class="abs leg" style="left:18px;top:712px;width:127px;height:148px">
<div class="row" style="top:0px"><span style="left:3px">81.5M</span><span style="left:35px;padding:0 3px;background:#29cc7a;">dace-2-data-3</span></div>
<div class="row" style="top:13px"><span style="left:3px">81.0M</span><span style="left:35px;padding:0 3px;background:#ccff99;">dace-1-data-3</span></div>
<div class="row" style="top:26px"><span style="left:3px">80.1M</span><span style="left:35px;padding:0 3px;background:#29cc29;">dace-9-data-3</span></div>
<div class="row" style="top:39px"><span style="left:3px">79.0M</span><span style="left:35px;padding:0 3px;background:#7acc29;">dace-3-data-3</span></div>
<div class="row" style="top:52px"><span style="left:3px">78.6M</span><span style="left:35px;padding:0 3px;background:#a3cc7a;">dace-8-data-3</span></div>
<div class="row" style="top:65px"><span style="left:3px">78.6M</span><span style="left:35px;padding:0 3px;background:#99ff33;">dace-5-data-3</span></div>
<div class="row" style="top:78px"><span style="left:3px">78.5M</span><span style="left:35px;padding:0 3px;background:#7acc7a;">dace-0-data-3</span></div>
<div class="row" style="top:91px"><span style="left:3px">78.5M</span><span style="left:35px;padding:0 3px;background:#99ff99;">dace-7-data-3</span></div>
<div class="row" style="top:104px"><span style="left:3px">78.4M</span><span style="left:35px;padding:0 3px;background:#33ff33;">dace-4-data-3</span></div>
<div class="row" style="top:117px"><span style="left:3px">78.3M</span><span style="left:35px;padding:0 3px;background:#33ff99;">dace-6-data-3</span></div>
<div class="row" style="top:130px"><span style="left:3px">...</span></div>
</div>
<div class="abs" style="left:18px;top:860px;width:125px;height:1px;background:#6a6962"></div>
<div class="t sum" style="left:23px;top:865px">793M<span style="margin-left:-1.3px"> per second</span></div>
<svg class="abs" style="left:145px;top:772px" width="10" height="27"><use href="#vh"/></svg>
<div class="abs" style="left:158px;top:712px;width:687px;height:148px;background:#fff;border-top:1px solid #b8b9bc;border-left:1px solid #b4b5b8;border-right:1px solid #e3e5ea"></div>
<svg class="abs" style="left:159px;top:713px" width="685" height="147" viewBox="0 0 685 147"><path d="M50.1 147 L50.1 147.0 L62.6 108.7 L75.0 35.0 C77.1 34.83 83.3 34.22 87.5 34.00 C91.7 33.78 95.8 33.80 100.0 33.70 C104.1 33.60 108.3 33.52 112.4 33.40 C116.6 33.28 120.7 32.98 124.9 33.00 C129.0 33.02 133.2 33.48 137.3 33.50 C141.5 33.52 145.6 33.18 149.8 33.10 C154.0 33.02 158.1 33.02 162.3 33.00 C166.4 32.98 170.6 32.87 174.7 33.00 C178.9 33.13 183.0 33.73 187.2 33.80 C191.3 33.87 195.5 33.53 199.6 33.40 C203.8 33.27 207.9 32.73 212.1 33.00 C216.3 33.27 220.4 34.90 224.6 35.00 C228.7 35.10 232.9 33.83 237.0 33.60 C241.2 33.37 245.3 33.60 249.5 33.60 C253.6 33.60 257.8 33.60 261.9 33.60 C266.1 33.60 270.2 33.43 274.4 33.60 C278.6 33.77 282.7 34.58 286.9 34.60 C291.0 34.62 295.2 33.80 299.3 33.70 C303.5 33.60 307.6 33.85 311.8 34.00 C315.9 34.15 320.1 34.65 324.2 34.60 C328.4 34.55 332.5 33.85 336.7 33.70 C340.9 33.55 345.0 33.70 349.2 33.70 C353.3 33.70 357.5 33.70 361.6 33.70 C365.8 33.70 369.9 33.70 374.1 33.70 C378.2 33.70 382.4 33.55 386.5 33.70 C390.7 33.85 394.8 34.60 399.0 34.60 C403.2 34.60 407.3 33.85 411.5 33.70 C415.6 33.55 419.8 33.70 423.9 33.70 C428.1 33.70 432.2 33.70 436.4 33.70 C440.5 33.70 444.7 33.70 448.8 33.70 C453.0 33.70 457.1 33.70 461.3 33.70 C465.5 33.70 469.6 33.57 473.8 33.70 C477.9 33.83 482.1 34.37 486.2 34.50 C490.4 34.63 494.5 34.63 498.7 34.50 C502.8 34.37 507.0 33.83 511.1 33.70 C515.3 33.57 519.4 33.70 523.6 33.70 C527.8 33.70 531.9 33.70 536.1 33.70 C540.2 33.70 544.4 33.55 548.5 33.70 C552.7 33.85 556.8 34.45 561.0 34.60 C565.1 34.75 569.3 34.62 573.4 34.60 C577.6 34.58 581.7 34.65 585.9 34.50 C590.1 34.35 594.2 33.73 598.4 33.70 C602.5 33.67 606.7 34.20 610.8 34.30 C615.0 34.40 619.1 34.38 623.3 34.30 C627.4 34.22 631.6 33.88 635.7 33.80 C639.9 33.72 644.0 33.80 648.2 33.80 C652.4 33.80 656.5 33.80 660.7 33.80 C664.8 33.80 669.0 33.67 673.1 33.80 C677.3 33.93 681.4 34.45 685.6 34.60 C689.7 34.75 696.0 34.68 698.0 34.70 L698.0 147 Z" fill="#29cc7a"/><path d="M50.1 147 L50.1 147.0 L62.6 111.8 L75.0 46.1 C77.1 45.95 83.3 45.40 87.5 45.24 C91.7 45.07 95.8 45.21 100.0 45.11 C104.1 45.02 108.3 44.81 112.4 44.68 C116.6 44.56 120.7 44.34 124.9 44.36 C129.0 44.38 133.2 44.80 137.3 44.82 C141.5 44.84 145.6 44.54 149.8 44.46 C154.0 44.39 158.1 44.41 162.3 44.38 C166.4 44.35 170.6 44.17 174.7 44.28 C178.9 44.39 183.0 44.98 187.2 45.03 C191.3 45.09 195.5 44.76 199.6 44.61 C203.8 44.47 207.9 43.88 212.1 44.14 C216.3 44.40 220.4 46.04 224.6 46.18 C228.7 46.32 232.9 45.21 237.0 44.99 C241.2 44.77 245.3 44.89 249.5 44.88 C253.6 44.87 257.8 44.94 261.9 44.94 C266.1 44.94 270.2 44.74 274.4 44.87 C278.6 45.00 282.7 45.68 286.9 45.71 C291.0 45.74 295.2 45.15 299.3 45.06 C303.5 44.98 307.6 45.10 311.8 45.19 C315.9 45.29 320.1 45.69 324.2 45.64 C328.4 45.59 332.5 45.01 336.7 44.90 C340.9 44.80 345.0 45.00 349.2 45.02 C353.3 45.05 357.5 45.03 361.6 45.05 C365.8 45.06 369.9 45.12 374.1 45.13 C378.2 45.13 382.4 44.98 386.5 45.08 C390.7 45.19 394.8 45.79 399.0 45.76 C403.2 45.72 407.3 45.00 411.5 44.87 C415.6 44.73 419.8 44.93 423.9 44.96 C428.1 44.98 432.2 45.02 436.4 45.01 C440.5 45.00 444.7 44.96 448.8 44.92 C453.0 44.88 457.1 44.76 461.3 44.76 C465.5 44.76 469.6 44.75 473.8 44.92 C477.9 45.08 482.1 45.64 486.2 45.77 C490.4 45.90 494.5 45.81 498.7 45.68 C502.8 45.56 507.0 45.11 511.1 45.01 C515.3 44.92 519.4 45.10 523.6 45.10 C527.8 45.10 531.9 45.06 536.1 45.04 C540.2 45.01 544.4 44.82 548.5 44.95 C552.7 45.08 556.8 45.65 561.0 45.81 C565.1 45.98 569.3 45.93 573.4 45.92 C577.6 45.91 581.7 45.92 585.9 45.75 C590.1 45.59 594.2 44.98 598.4 44.93 C602.5 44.88 606.7 45.36 610.8 45.45 C615.0 45.54 619.1 45.54 623.3 45.48 C627.4 45.43 631.6 45.17 635.7 45.11 C639.9 45.05 644.0 45.12 648.2 45.11 C652.4 45.10 656.5 45.05 660.7 45.03 C664.8 45.02 669.0 44.88 673.1 45.02 C677.3 45.16 681.4 45.72 685.6 45.86 C689.7 46.00 696.0 45.86 698.0 45.86 L698.0 147 Z" fill="#33ff99"/><path d="M50.1 147 L50.1 147.0 L62.6 115.2 L75.0 57.5 C77.1 57.36 83.3 56.84 87.5 56.71 C91.7 56.58 95.8 56.80 100.0 56.71 C104.1 56.63 108.3 56.33 112.4 56.19 C116.6 56.06 120.7 55.85 124.9 55.90 C129.0 55.94 133.2 56.45 137.3 56.46 C141.5 56.48 145.6 56.06 149.8 55.98 C154.0 55.91 158.1 56.01 162.3 56.00 C166.4 55.98 170.6 55.82 174.7 55.91 C178.9 55.99 183.0 56.46 187.2 56.49 C191.3 56.53 195.5 56.22 199.6 56.09 C203.8 55.97 207.9 55.49 212.1 55.76 C216.3 56.04 220.4 57.58 224.6 57.72 C228.7 57.86 232.9 56.81 237.0 56.58 C241.2 56.36 245.3 56.38 249.5 56.35 C253.6 56.32 257.8 56.41 261.9 56.41 C266.1 56.41 270.2 56.22 274.4 56.33 C278.6 56.44 282.7 57.04 286.9 57.07 C291.0 57.11 295.2 56.62 299.3 56.54 C303.5 56.46 307.6 56.50 311.8 56.60 C315.9 56.70 320.1 57.13 324.2 57.13 C328.4 57.13 332.5 56.69 336.7 56.58 C340.9 56.48 345.0 56.54 349.2 56.52 C353.3 56.49 357.5 56.39 361.6 56.44 C365.8 56.49 369.9 56.77 374.1 56.83 C378.2 56.88 382.4 56.68 386.5 56.76 C390.7 56.84 394.8 57.35 399.0 57.31 C403.2 57.27 407.3 56.63 411.5 56.52 C415.6 56.40 419.8 56.58 423.9 56.61 C428.1 56.64 432.2 56.68 436.4 56.70 C440.5 56.73 444.7 56.75 448.8 56.73 C453.0 56.71 457.1 56.60 461.3 56.57 C465.5 56.54 469.6 56.44 473.8 56.55 C477.9 56.66 482.1 57.14 486.2 57.25 C490.4 57.36 494.5 57.31 498.7 57.20 C502.8 57.09 507.0 56.68 511.1 56.58 C515.3 56.48 519.4 56.60 523.6 56.59 C527.8 56.58 531.9 56.51 536.1 56.50 C540.2 56.49 544.4 56.42 548.5 56.54 C552.7 56.66 556.8 57.10 561.0 57.24 C565.1 57.38 569.3 57.39 573.4 57.40 C577.6 57.40 581.7 57.40 585.9 57.27 C590.1 57.14 594.2 56.63 598.4 56.62 C602.5 56.62 606.7 57.14 610.8 57.24 C615.0 57.34 619.1 57.28 623.3 57.21 C627.4 57.14 631.6 56.88 635.7 56.80 C639.9 56.72 644.0 56.76 648.2 56.74 C652.4 56.73 656.5 56.72 660.7 56.70 C664.8 56.68 669.0 56.51 673.1 56.63 C677.3 56.75 681.4 57.30 685.6 57.43 C689.7 57.56 696.0 57.40 698.0 57.40 L698.0 147 Z" fill="#7acc7a"/><path d="M50.1 147 L50.1 147.0 L62.6 118.6 L75.0 68.8 C77.1 68.68 83.3 68.28 87.5 68.15 C91.7 68.02 95.8 68.16 100.0 68.03 C104.1 67.89 108.3 67.48 112.4 67.32 C116.6 67.17 120.7 67.03 124.9 67.12 C129.0 67.20 133.2 67.76 137.3 67.83 C141.5 67.89 145.6 67.60 149.8 67.52 C154.0 67.44 158.1 67.42 162.3 67.33 C166.4 67.24 170.6 66.94 174.7 66.98 C178.9 67.03 183.0 67.51 187.2 67.58 C191.3 67.65 195.5 67.47 199.6 67.41 C203.8 67.35 207.9 66.98 212.1 67.21 C216.3 67.43 220.4 68.66 224.6 68.75 C228.7 68.85 232.9 67.99 237.0 67.80 C241.2 67.61 245.3 67.67 249.5 67.62 C253.6 67.58 257.8 67.53 261.9 67.54 C266.1 67.54 270.2 67.53 274.4 67.65 C278.6 67.78 282.7 68.25 286.9 68.29 C291.0 68.32 295.2 67.94 299.3 67.88 C303.5 67.81 307.6 67.82 311.8 67.90 C315.9 67.98 320.1 68.32 324.2 68.35 C328.4 68.38 332.5 68.13 336.7 68.07 C340.9 68.02 345.0 68.07 349.2 68.01 C353.3 67.95 357.5 67.72 361.6 67.71 C365.8 67.69 369.9 67.89 374.1 67.92 C378.2 67.96 382.4 67.83 386.5 67.94 C390.7 68.04 394.8 68.56 399.0 68.55 C403.2 68.54 407.3 68.01 411.5 67.89 C415.6 67.78 419.8 67.84 423.9 67.85 C428.1 67.85 432.2 67.92 436.4 67.94 C440.5 67.95 444.7 67.98 448.8 67.95 C453.0 67.93 457.1 67.82 461.3 67.79 C465.5 67.76 469.6 67.65 473.8 67.75 C477.9 67.84 482.1 68.26 486.2 68.37 C490.4 68.49 494.5 68.54 498.7 68.46 C502.8 68.38 507.0 67.96 511.1 67.89 C515.3 67.81 519.4 68.01 523.6 68.02 C527.8 68.02 531.9 67.93 536.1 67.91 C540.2 67.89 544.4 67.82 548.5 67.89 C552.7 67.97 556.8 68.26 561.0 68.37 C565.1 68.47 569.3 68.48 573.4 68.52 C577.6 68.57 581.7 68.71 585.9 68.63 C590.1 68.55 594.2 68.09 598.4 68.05 C602.5 68.00 606.7 68.30 610.8 68.35 C615.0 68.40 619.1 68.41 623.3 68.34 C627.4 68.28 631.6 68.04 635.7 67.98 C639.9 67.92 644.0 67.98 648.2 67.99 C652.4 68.00 656.5 68.06 660.7 68.04 C664.8 68.02 669.0 67.81 673.1 67.88 C677.3 67.96 681.4 68.39 685.6 68.47 C689.7 68.56 696.0 68.39 698.0 68.38 L698.0 147 Z" fill="#99ff99"/><path d="M50.1 147 L50.1 147.0 L62.6 122.2 L75.0 79.8 C77.1 79.72 83.3 79.36 87.5 79.29 C91.7 79.22 95.8 79.48 100.0 79.41 C104.1 79.33 108.3 78.98 112.4 78.82 C116.6 78.67 120.7 78.43 124.9 78.47 C129.0 78.52 133.2 79.01 137.3 79.09 C141.5 79.18 145.6 79.02 149.8 78.98 C154.0 78.93 158.1 78.91 162.3 78.82 C166.4 78.72 170.6 78.38 174.7 78.41 C178.9 78.44 183.0 78.93 187.2 78.99 C191.3 79.05 195.5 78.87 199.6 78.77 C203.8 78.67 207.9 78.23 212.1 78.37 C216.3 78.51 220.4 79.52 224.6 79.62 C228.7 79.71 232.9 79.03 237.0 78.94 C241.2 78.84 245.3 79.00 249.5 79.02 C253.6 79.04 257.8 79.02 261.9 79.04 C266.1 79.07 270.2 79.05 274.4 79.15 C278.6 79.26 282.7 79.64 286.9 79.66 C291.0 79.69 295.2 79.40 299.3 79.32 C303.5 79.23 307.6 79.10 311.8 79.15 C315.9 79.19 320.1 79.52 324.2 79.56 C328.4 79.60 332.5 79.44 336.7 79.39 C340.9 79.34 345.0 79.36 349.2 79.27 C353.3 79.17 357.5 78.87 361.6 78.82 C365.8 78.78 369.9 78.91 374.1 78.98 C378.2 79.04 382.4 79.07 386.5 79.21 C390.7 79.34 394.8 79.79 399.0 79.77 C403.2 79.76 407.3 79.21 411.5 79.12 C415.6 79.02 419.8 79.16 423.9 79.20 C428.1 79.24 432.2 79.36 436.4 79.36 C440.5 79.36 444.7 79.25 448.8 79.21 C453.0 79.17 457.1 79.17 461.3 79.13 C465.5 79.09 469.6 78.91 473.8 78.95 C477.9 79.00 482.1 79.30 486.2 79.42 C490.4 79.54 494.5 79.71 498.7 79.69 C502.8 79.67 507.0 79.35 511.1 79.31 C515.3 79.28 519.4 79.47 523.6 79.47 C527.8 79.46 531.9 79.34 536.1 79.28 C540.2 79.23 544.4 79.11 548.5 79.15 C552.7 79.18 556.8 79.41 561.0 79.48 C565.1 79.54 569.3 79.52 573.4 79.54 C577.6 79.57 581.7 79.67 585.9 79.61 C590.1 79.54 594.2 79.13 598.4 79.14 C602.5 79.14 606.7 79.56 610.8 79.63 C615.0 79.70 619.1 79.62 623.3 79.54 C627.4 79.46 631.6 79.22 635.7 79.16 C639.9 79.11 644.0 79.18 648.2 79.21 C652.4 79.24 656.5 79.32 660.7 79.34 C664.8 79.37 669.0 79.29 673.1 79.34 C677.3 79.38 681.4 79.60 685.6 79.63 C689.7 79.66 696.0 79.52 698.0 79.50 L698.0 147 Z" fill="#29cc29"/><path d="M50.1 147 L50.1 147.0 L62.6 125.8 L75.0 90.5 C77.1 90.45 83.3 90.06 87.5 89.99 C91.7 89.91 95.8 90.11 100.0 90.08 C104.1 90.05 108.3 89.90 112.4 89.81 C116.6 89.72 120.7 89.55 124.9 89.56 C129.0 89.56 133.2 89.81 137.3 89.84 C141.5 89.86 145.6 89.73 149.8 89.69 C154.0 89.65 158.1 89.68 162.3 89.60 C166.4 89.51 170.6 89.13 174.7 89.20 C178.9 89.26 183.0 89.87 187.2 89.98 C191.3 90.09 195.5 89.96 199.6 89.87 C203.8 89.78 207.9 89.33 212.1 89.44 C216.3 89.56 220.4 90.48 224.6 90.56 C228.7 90.65 232.9 90.05 237.0 89.94 C241.2 89.83 245.3 89.90 249.5 89.90 C253.6 89.91 257.8 89.93 261.9 89.95 C266.1 89.97 270.2 89.96 274.4 90.03 C278.6 90.11 282.7 90.36 286.9 90.41 C291.0 90.46 295.2 90.38 299.3 90.34 C303.5 90.31 307.6 90.17 311.8 90.19 C315.9 90.21 320.1 90.43 324.2 90.46 C328.4 90.50 332.5 90.44 336.7 90.39 C340.9 90.33 345.0 90.23 349.2 90.14 C353.3 90.05 357.5 89.85 361.6 89.82 C365.8 89.79 369.9 89.89 374.1 89.95 C378.2 90.02 382.4 90.08 386.5 90.19 C390.7 90.31 394.8 90.67 399.0 90.65 C403.2 90.63 407.3 90.13 411.5 90.08 C415.6 90.02 419.8 90.24 423.9 90.31 C428.1 90.38 432.2 90.52 436.4 90.50 C440.5 90.48 444.7 90.24 448.8 90.17 C453.0 90.11 457.1 90.13 461.3 90.12 C465.5 90.11 469.6 90.07 473.8 90.12 C477.9 90.17 482.1 90.36 486.2 90.41 C490.4 90.47 494.5 90.48 498.7 90.45 C502.8 90.42 507.0 90.24 511.1 90.24 C515.3 90.23 519.4 90.44 523.6 90.41 C527.8 90.39 531.9 90.14 536.1 90.07 C540.2 90.01 544.4 89.95 548.5 90.02 C552.7 90.09 556.8 90.42 561.0 90.48 C565.1 90.55 569.3 90.45 573.4 90.42 C577.6 90.39 581.7 90.36 585.9 90.30 C590.1 90.23 594.2 89.96 598.4 90.02 C602.5 90.08 606.7 90.58 610.8 90.68 C615.0 90.77 619.1 90.68 623.3 90.60 C627.4 90.53 631.6 90.31 635.7 90.22 C639.9 90.14 644.0 90.08 648.2 90.09 C652.4 90.10 656.5 90.25 660.7 90.28 C664.8 90.31 669.0 90.28 673.1 90.30 C677.3 90.32 681.4 90.38 685.6 90.40 C689.7 90.42 696.0 90.42 698.0 90.42 L698.0 147 Z" fill="#33ff33"/><path d="M50.1 147 L50.1 147.0 L62.6 129.9 L75.0 102.2 C77.1 102.08 83.3 101.78 87.5 101.69 C91.7 101.61 95.8 101.72 100.0 101.67 C104.1 101.63 108.3 101.48 112.4 101.41 C116.6 101.34 120.7 101.24 124.9 101.25 C129.0 101.26 133.2 101.47 137.3 101.48 C141.5 101.49 145.6 101.32 149.8 101.31 C154.0 101.30 158.1 101.47 162.3 101.42 C166.4 101.37 170.6 100.99 174.7 101.00 C178.9 101.02 183.0 101.42 187.2 101.52 C191.3 101.63 195.5 101.68 199.6 101.65 C203.8 101.61 207.9 101.20 212.1 101.28 C216.3 101.37 220.4 102.09 224.6 102.15 C228.7 102.22 232.9 101.77 237.0 101.66 C241.2 101.56 245.3 101.53 249.5 101.54 C253.6 101.55 257.8 101.67 261.9 101.72 C266.1 101.77 270.2 101.81 274.4 101.84 C278.6 101.87 282.7 101.92 286.9 101.90 C291.0 101.87 295.2 101.75 299.3 101.72 C303.5 101.69 307.6 101.65 311.8 101.72 C315.9 101.80 320.1 102.09 324.2 102.17 C328.4 102.25 332.5 102.25 336.7 102.19 C340.9 102.13 345.0 101.92 349.2 101.81 C353.3 101.69 357.5 101.52 361.6 101.48 C365.8 101.44 369.9 101.50 374.1 101.55 C378.2 101.59 382.4 101.68 386.5 101.77 C390.7 101.87 394.8 102.13 399.0 102.11 C403.2 102.09 407.3 101.68 411.5 101.65 C415.6 101.61 419.8 101.83 423.9 101.91 C428.1 101.99 432.2 102.13 436.4 102.14 C440.5 102.16 444.7 102.06 448.8 102.03 C453.0 102.00 457.1 101.98 461.3 101.96 C465.5 101.94 469.6 101.85 473.8 101.88 C477.9 101.92 482.1 102.12 486.2 102.17 C490.4 102.22 494.5 102.26 498.7 102.20 C502.8 102.14 507.0 101.85 511.1 101.81 C515.3 101.76 519.4 101.94 523.6 101.92 C527.8 101.89 531.9 101.71 536.1 101.66 C540.2 101.61 544.4 101.54 548.5 101.61 C552.7 101.68 556.8 102.03 561.0 102.08 C565.1 102.13 569.3 101.95 573.4 101.91 C577.6 101.88 581.7 101.90 585.9 101.88 C590.1 101.86 594.2 101.72 598.4 101.77 C602.5 101.81 606.7 102.10 610.8 102.15 C615.0 102.21 619.1 102.14 623.3 102.11 C627.4 102.07 631.6 101.98 635.7 101.96 C639.9 101.93 644.0 101.96 648.2 101.96 C652.4 101.95 656.5 101.93 660.7 101.92 C664.8 101.91 669.0 101.89 673.1 101.88 C677.3 101.88 681.4 101.87 685.6 101.89 C689.7 101.91 696.0 102.00 698.0 102.02 L698.0 147 Z" fill="#a3cc7a"/><path d="M50.1 147 L50.1 147.0 L62.6 133.8 L75.0 113.2 C77.1 113.10 83.3 112.82 87.5 112.74 C91.7 112.67 95.8 112.74 100.0 112.72 C104.1 112.70 108.3 112.67 112.4 112.61 C116.6 112.55 120.7 112.37 124.9 112.37 C129.0 112.36 133.2 112.55 137.3 112.58 C141.5 112.60 145.6 112.50 149.8 112.51 C154.0 112.53 158.1 112.70 162.3 112.68 C166.4 112.66 170.6 112.38 174.7 112.40 C178.9 112.43 183.0 112.76 187.2 112.83 C191.3 112.91 195.5 112.95 199.6 112.86 C203.8 112.77 207.9 112.29 212.1 112.30 C216.3 112.31 220.4 112.86 224.6 112.92 C228.7 112.99 232.9 112.71 237.0 112.67 C241.2 112.63 245.3 112.67 249.5 112.70 C253.6 112.73 257.8 112.82 261.9 112.84 C266.1 112.85 270.2 112.79 274.4 112.77 C278.6 112.75 282.7 112.77 286.9 112.74 C291.0 112.71 295.2 112.60 299.3 112.60 C303.5 112.60 307.6 112.68 311.8 112.76 C315.9 112.83 320.1 113.00 324.2 113.04 C328.4 113.09 332.5 113.05 336.7 113.03 C340.9 113.01 345.0 113.01 349.2 112.91 C353.3 112.82 357.5 112.55 361.6 112.45 C365.8 112.36 369.9 112.30 374.1 112.35 C378.2 112.39 382.4 112.60 386.5 112.72 C390.7 112.84 394.8 113.08 399.0 113.07 C403.2 113.06 407.3 112.69 411.5 112.66 C415.6 112.63 419.8 112.78 423.9 112.88 C428.1 112.98 432.2 113.20 436.4 113.24 C440.5 113.27 444.7 113.13 448.8 113.10 C453.0 113.08 457.1 113.12 461.3 113.08 C465.5 113.04 469.6 112.87 473.8 112.88 C477.9 112.88 482.1 113.06 486.2 113.11 C490.4 113.17 494.5 113.27 498.7 113.20 C502.8 113.13 507.0 112.75 511.1 112.70 C515.3 112.66 519.4 112.92 523.6 112.92 C527.8 112.93 531.9 112.75 536.1 112.73 C540.2 112.71 544.4 112.71 548.5 112.78 C552.7 112.84 556.8 113.11 561.0 113.11 C565.1 113.10 569.3 112.79 573.4 112.73 C577.6 112.68 581.7 112.77 585.9 112.78 C590.1 112.79 594.2 112.72 598.4 112.79 C602.5 112.86 606.7 113.12 610.8 113.18 C615.0 113.25 619.1 113.20 623.3 113.17 C627.4 113.13 631.6 113.03 635.7 112.97 C639.9 112.92 644.0 112.88 648.2 112.85 C652.4 112.81 656.5 112.79 660.7 112.77 C664.8 112.75 669.0 112.71 673.1 112.73 C677.3 112.75 681.4 112.82 685.6 112.89 C689.7 112.97 696.0 113.14 698.0 113.19 L698.0 147 Z" fill="#99ff33"/><path d="M50.1 147 L50.1 147.0 L62.6 138.0 L75.0 124.3 C77.1 124.27 83.3 124.08 87.5 124.05 C91.7 124.01 95.8 124.14 100.0 124.12 C104.1 124.09 108.3 123.99 112.4 123.91 C116.6 123.84 120.7 123.68 124.9 123.68 C129.0 123.68 133.2 123.87 137.3 123.92 C141.5 123.96 145.6 123.94 149.8 123.97 C154.0 123.99 158.1 124.10 162.3 124.06 C166.4 124.01 170.6 123.73 174.7 123.71 C178.9 123.69 183.0 123.88 187.2 123.94 C191.3 123.99 195.5 124.07 199.6 124.03 C203.8 123.99 207.9 123.65 212.1 123.67 C216.3 123.69 220.4 124.08 224.6 124.14 C228.7 124.21 232.9 124.07 237.0 124.05 C241.2 124.04 245.3 124.07 249.5 124.08 C253.6 124.09 257.8 124.13 261.9 124.10 C266.1 124.08 270.2 123.96 274.4 123.93 C278.6 123.91 282.7 123.94 286.9 123.96 C291.0 123.99 295.2 124.03 299.3 124.06 C303.5 124.09 307.6 124.12 311.8 124.17 C315.9 124.21 320.1 124.33 324.2 124.34 C328.4 124.35 332.5 124.28 336.7 124.24 C340.9 124.20 345.0 124.16 349.2 124.09 C353.3 124.01 357.5 123.85 361.6 123.81 C365.8 123.77 369.9 123.78 374.1 123.83 C378.2 123.87 382.4 123.99 386.5 124.07 C390.7 124.16 394.8 124.35 399.0 124.33 C403.2 124.31 407.3 124.04 411.5 123.98 C415.6 123.91 419.8 123.91 423.9 123.95 C428.1 123.99 432.2 124.17 436.4 124.21 C440.5 124.24 444.7 124.16 448.8 124.15 C453.0 124.13 457.1 124.13 461.3 124.12 C465.5 124.11 469.6 124.05 473.8 124.08 C477.9 124.11 482.1 124.23 486.2 124.30 C490.4 124.37 494.5 124.51 498.7 124.49 C502.8 124.48 507.0 124.25 511.1 124.20 C515.3 124.15 519.4 124.23 523.6 124.20 C527.8 124.17 531.9 124.04 536.1 124.00 C540.2 123.96 544.4 123.91 548.5 123.95 C552.7 123.99 556.8 124.23 561.0 124.26 C565.1 124.28 569.3 124.12 573.4 124.08 C577.6 124.04 581.7 124.04 585.9 124.00 C590.1 123.97 594.2 123.84 598.4 123.88 C602.5 123.91 606.7 124.14 610.8 124.20 C615.0 124.25 619.1 124.21 623.3 124.20 C627.4 124.19 631.6 124.14 635.7 124.13 C639.9 124.13 644.0 124.17 648.2 124.15 C652.4 124.14 656.5 124.03 660.7 124.02 C664.8 124.01 669.0 124.07 673.1 124.10 C677.3 124.12 681.4 124.12 685.6 124.16 C689.7 124.20 696.0 124.30 698.0 124.32 L698.0 147 Z" fill="#ccff99"/><path d="M50.1 147 L50.1 147.0 L62.6 142.6 L75.0 136.1 C77.1 136.07 83.3 135.93 87.5 135.88 C91.7 135.83 95.8 135.80 100.0 135.79 C104.1 135.78 108.3 135.83 112.4 135.81 C116.6 135.79 120.7 135.68 124.9 135.69 C129.0 135.69 133.2 135.80 137.3 135.83 C141.5 135.85 145.6 135.84 149.8 135.83 C154.0 135.83 158.1 135.84 162.3 135.82 C166.4 135.81 170.6 135.74 174.7 135.74 C178.9 135.74 183.0 135.79 187.2 135.81 C191.3 135.83 195.5 135.87 199.6 135.85 C203.8 135.82 207.9 135.65 212.1 135.66 C216.3 135.66 220.4 135.83 224.6 135.88 C228.7 135.93 232.9 135.95 237.0 135.94 C241.2 135.94 245.3 135.88 249.5 135.85 C253.6 135.82 257.8 135.78 261.9 135.75 C266.1 135.73 270.2 135.71 274.4 135.72 C278.6 135.72 282.7 135.76 286.9 135.80 C291.0 135.83 295.2 135.90 299.3 135.91 C303.5 135.92 307.6 135.86 311.8 135.87 C315.9 135.87 320.1 135.88 324.2 135.92 C328.4 135.96 332.5 136.07 336.7 136.10 C340.9 136.14 345.0 136.19 349.2 136.15 C353.3 136.11 357.5 135.93 361.6 135.87 C365.8 135.81 369.9 135.79 374.1 135.81 C378.2 135.83 382.4 135.95 386.5 136.02 C390.7 136.08 394.8 136.21 399.0 136.19 C403.2 136.18 407.3 135.97 411.5 135.92 C415.6 135.87 419.8 135.85 423.9 135.88 C428.1 135.90 432.2 136.02 436.4 136.06 C440.5 136.09 444.7 136.07 448.8 136.09 C453.0 136.10 457.1 136.18 461.3 136.17 C465.5 136.15 469.6 136.04 473.8 136.01 C477.9 135.98 482.1 135.97 486.2 136.00 C490.4 136.04 494.5 136.19 498.7 136.21 C502.8 136.22 507.0 136.11 511.1 136.08 C515.3 136.06 519.4 136.05 523.6 136.04 C527.8 136.02 531.9 135.99 536.1 135.99 C540.2 135.99 544.4 135.99 548.5 136.01 C552.7 136.04 556.8 136.12 561.0 136.13 C565.1 136.13 569.3 136.03 573.4 136.01 C577.6 136.00 581.7 136.05 585.9 136.04 C590.1 136.03 594.2 135.96 598.4 135.94 C602.5 135.92 606.7 135.94 610.8 135.94 C615.0 135.94 619.1 135.95 623.3 135.94 C627.4 135.93 631.6 135.88 635.7 135.90 C639.9 135.91 644.0 136.03 648.2 136.04 C652.4 136.05 656.5 135.99 660.7 135.98 C664.8 135.96 669.0 135.94 673.1 135.95 C677.3 135.96 681.4 136.01 685.6 136.03 C689.7 136.06 696.0 136.08 698.0 136.09 L698.0 147 Z" fill="#7acc29"/></svg>
<div class="abs" style="left:307px;top:704px;width:1px;height:156px;background:#2f4b66"></div>
<div class="t cur" style="left:307px;top:693px">16:26:45</div>
<div class="abs" style="left:845px;top:712px;width:8px;height:1px;background:#6a6a6a"></div>
<div class="abs" style="left:845px;top:860px;width:8px;height:1px;background:#6a6a6a"></div>
<div class="t yl" style="left:855px;top:706px">1G</div>
<div class="t yl" style="left:855px;top:854px">0</div>
<div class="abs" style="left:245px;top:861px;width:1px;height:7px;background:#555"></div>
<div class="t xl" style="left:245px;top:870px">16:26:40</div>
<div class="abs" style="left:370px;top:861px;width:1px;height:7px;background:#555"></div>
<div class="t xl" style="left:370px;top:870px">16:26:50</div>
<div class="abs" style="left:494px;top:861px;width:1px;height:7px;background:#555"></div>
<div class="t xl" style="left:494px;top:870px">16:27</div>
<div class="abs" style="left:619px;top:861px;width:1px;height:7px;background:#555"></div>
<div class="t xl" style="left:619px;top:870px">16:27:10</div>
<div class="abs" style="left:743px;top:861px;width:1px;height:7px;background:#555"></div>
<div class="t xl" style="left:743px;top:870px">16:27:20</div>
<div class="t xd" style="left:245px;top:883px">2009-2-23</div>
<svg class="abs" style="left:454px;top:884px" width="27" height="10"><use href="#hh"/></svg>
</div></body></html>
